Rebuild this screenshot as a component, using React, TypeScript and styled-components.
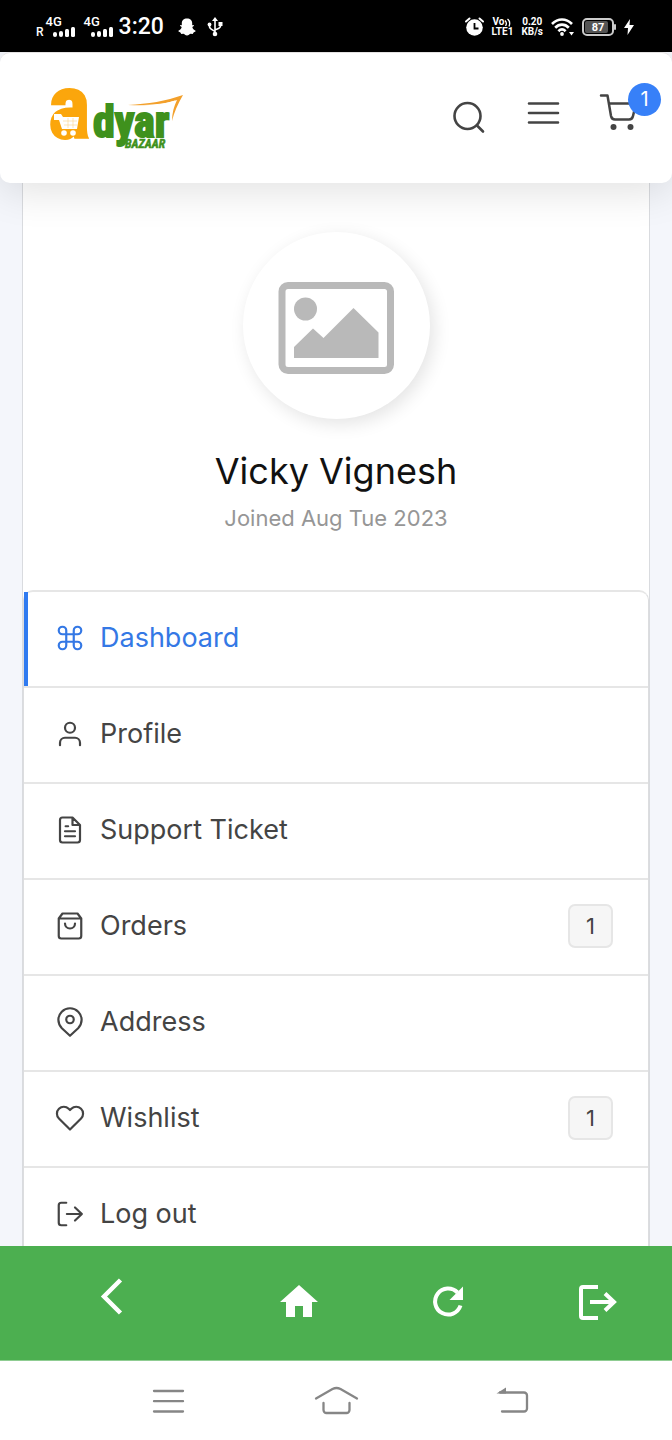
import React from "react";
import styled, { createGlobalStyle, css } from "styled-components";

const GlobalStyle = createGlobalStyle`
  * { box-sizing: border-box; }
  body {
    margin: 0;
    background: #f4f6fb;
    color: #444;
    font-family: Inter, Roboto, "Liberation Sans", sans-serif;
  }
  button { border: 0; padding: 0; background: none; color: inherit; font: inherit; cursor: pointer; }
  svg { display: block; flex: none; overflow: visible; }
`;

const Screen = styled.div`
  display: flex;
  flex-direction: column;
  height: 100vh;
  overflow: hidden;
`;

/* ---------- Status bar ---------- */

const StatusBar = styled.div`
  display: flex;
  flex: none;
  align-items: center;
  justify-content: space-between;
  padding: 17px 38px 15px 36px;
  background: #000;
  color: #fff;
  font-family: Roboto, sans-serif;
`;

const StatusGroup = styled.div<{ $gap: number }>`
  display: flex;
  align-items: center;
  gap: ${(p) => p.$gap}px;
  height: 20px;
`;

const Roaming = styled.span`
  align-self: flex-end;
  margin-right: 2px;
  font-size: 12px;
  font-weight: 500;
  line-height: 10px;
`;

const Signals = styled.div`
  display: flex;
  gap: 15px;
`;

const Signal = styled.div`
  display: flex;
  flex-direction: column;
  width: 23px;
  font-size: 13px;
  font-weight: 500;
  line-height: 10px;

  svg { margin-left: 7px; }
`;

const Clock = styled.span`
  margin: 0 14px 0 12px;
  font-size: 23px;
  font-weight: 500;
  line-height: 20px;
`;

const Stacked = styled.div`
  display: flex;
  flex-direction: column;
  align-items: center;
  font-size: 10px;
  font-weight: 700;
  line-height: 10px;
`;

const VoLine = styled.span`
  display: flex;
  align-items: center;
`;

/* ---------- Header ---------- */

const Header = styled.header`
  position: relative;
  z-index: 1;
  display: flex;
  flex: none;
  align-items: center;
  justify-content: space-between;
  padding: 32px 35px 31px 46px;
  border-top: 1px solid #e4e2e2;
  border-radius: 10px;
  background: #fff;
  box-shadow: 0 8px 40px rgba(0, 0, 0, 0.12);
`;

const LogoLink = styled.a`
  display: block;
`;

const Actions = styled.div`
  display: flex;
  gap: 40px;
  padding-bottom: 4px;
  color: #444;
`;

const IconButton = styled.button`
  position: relative;
  display: flex;
`;

const CartCount = styled.span`
  position: absolute;
  top: -10px;
  right: -24px;
  width: 33px;
  border-radius: 50%;
  background: #3780f8;
  color: #fff;
  font-size: 20px;
  line-height: 33px;
  text-align: center;
`;

/* ---------- Account card ---------- */

const Main = styled.main`
  flex: 1;
  min-height: 0;
  overflow: hidden;
  padding: 0 22px;
`;

const Card = styled.section`
  border: solid #d9dbdf;
  border-width: 0 1px;
  background: #fff;
`;

const Summary = styled.div`
  display: flex;
  flex-direction: column;
  align-items: center;
  padding: 49px 16px 58px;
`;

const Avatar = styled.div`
  display: flex;
  align-items: center;
  justify-content: center;
  width: 187px;
  height: 187px;
  margin-bottom: 30px;
  padding-top: 4px;
  border-radius: 50%;
  background: #fff;
  box-shadow: 4px 5px 18px rgba(0, 0, 0, 0.11);
`;

const Name = styled.h1`
  margin: 0;
  color: #111;
  font-size: 36px;
  font-weight: 400;
  line-height: 44px;
`;

const Joined = styled.p`
  margin: 11px 0 0;
  color: #969696;
  font-size: 22px;
  line-height: 28px;
`;

const Menu = styled.ul`
  margin: 0;
  padding: 0;
  border: 1px solid #dcdddf;
  border-top: 2px solid #e6e6e6;
  border-radius: 10px 10px 0 0;
  list-style: none;
`;

const MenuLink = styled.a<{ $active?: boolean }>`
  display: flex;
  align-items: center;
  gap: 15px;
  height: 96px;
  padding: 0 35px 2px 31px;
  border-bottom: 2px solid #e6e6e6;
  color: #444;
  font-size: 27px;
  line-height: 32px;
  text-decoration: none;

  ${(p) =>
    p.$active &&
    css`
      color: #3478e5;
      box-shadow: inset 4px 0 #2f7af0;
    `}
`;

const Count = styled.span`
  width: 45px;
  margin-left: auto;
  border: 2px solid #e6e6e6;
  border-radius: 7px;
  background: #f6f6f6;
  font-size: 22px;
  line-height: 40px;
  text-align: center;
`;

/* ---------- Bottom bars ---------- */

const AppBar = styled.nav`
  display: grid;
  flex: none;
  grid-template-columns: 3fr 2fr 2fr 2fr;
  justify-items: center;
  padding: 32px 0 34px;
  border-bottom: 1px solid #8fcd92;
  background: #4caf50;
  color: #fff;
`;

const SystemBar = styled.nav`
  display: grid;
  flex: none;
  grid-template-columns: repeat(3, 1fr);
  justify-items: center;
  padding: 16px 12.5% 15px;
  background: #fff;
  color: #868686;
`;

/* ---------- Drawings ---------- */

const LineIcon = ({ children }: { children: React.ReactNode }) => (
  <svg width="30" height="30" viewBox="0 0 24 24" fill="none" stroke="currentColor" strokeWidth="1.75" strokeLinecap="round" strokeLinejoin="round" aria-hidden="true">
    {children}
  </svg>
);

const SignalBars = () => (
  <svg width="23" height="11" viewBox="0 0 23 11" fill="currentColor" aria-hidden="true">
    <rect x="0" y="5" width="4" height="5" rx="2" />
    <rect x="6" y="4" width="4" height="6" rx="2" />
    <rect x="12" y="2" width="4" height="8" rx="1.5" />
    <rect x="18" y="0" width="4" height="10" rx="1.5" />
  </svg>
);

const Ghost = () => (
  <svg width="18" height="18" viewBox="0 0 18 18" fill="currentColor" aria-hidden="true">
    <path d="M9 .5c3.200 0 5.200 2 5.200 4.700v2l1.400-.1c.5.3.3.9-.2 1.200l-1.100.8c.4 1.800 1.500 3.100 3.300 3.700.3.7-1 1.300-2 1.600l-.9 1.500-2-.1c-1.200.2-2 1.700-3.700 1.700s-2.500-1.500-3.700-1.700l-2 .1-.9-1.500c-1-.3-2.300-.9-2-1.600 1.800-.6 2.900-1.900 3.300-3.700l-1.100-.8c-.5-.3-.7-.9-.2-1.200l1.400.1v-2C3.800 2.500 5.800.5 9 .5z" />
  </svg>
);

const Usb = () => (
  <svg width="16" height="20" viewBox="0 0 16 20" fill="none" stroke="currentColor" strokeWidth="1.6" aria-hidden="true">
    <path d="M8 3v13M2.500 8v1.500C2.500 12 5 12.500 8 14.500M13.500 7v2C13.500 11.500 11 11.500 8 13" />
    <path d="M8 0l3 4H5z" fill="currentColor" stroke="none" />
    <circle cx="8" cy="17" r="2.300" fill="currentColor" stroke="none" />
    <circle cx="2.500" cy="7.500" r="1.900" fill="currentColor" stroke="none" />
    <rect x="11.500" y="5" width="4" height="4" fill="currentColor" stroke="none" />
  </svg>
);

const Alarm = () => (
  <svg width="19" height="20" viewBox="0 0 19 20" fill="none" aria-hidden="true">
    <circle cx="9.500" cy="10.500" r="8.300" fill="#fff" />
    <path d="M1 4.500L4.500 1.500M18 4.500L14.500 1.500" stroke="#fff" strokeWidth="2" strokeLinecap="round" />
    <path d="M9.500 6V11.500h4" stroke="#000" strokeWidth="1.800" />
  </svg>
);

const Waves = () => (
  <svg width="8" height="9" viewBox="0 0 8 9" fill="none" stroke="currentColor" strokeWidth="1.3" aria-hidden="true">
    <path d="M1 2.500c1.500 1.500 1.500 4 .5 5.500M3.500 1C6 3 6 6 5 8.500" />
  </svg>
);

const Wifi = () => (
  <svg width="23" height="19" viewBox="0 0 23 19" fill="none" stroke="currentColor" strokeWidth="2.7" aria-hidden="true">
    <path d="M1 6C7 0 15 0 21 6M4.200 9.700c4-4 9.600-4 13.600 0M7.400 13.200c2.200-2.200 5-2.200 7.200 0" />
    <circle cx="11" cy="16" r="1.900" fill="currentColor" stroke="none" />
    <path d="M18 14h5l-2.500 3.500z" fill="currentColor" stroke="none" />
  </svg>
);

const Battery = () => (
  <svg width="34" height="20" viewBox="0 0 34 20" aria-label="Battery 87%">
    <rect x="1" y="2" width="30" height="16" rx="4" fill="#000" stroke="#ccc" strokeWidth="2" />
    <rect x="3" y="4" width="23" height="12" rx="2" fill="#555" />
    <rect x="32" y="7" width="2" height="6" rx="1" fill="#ccc" />
    <text x="16" y="14" textAnchor="middle" fill="#fff" fontFamily="Roboto, sans-serif" fontSize="11" fontWeight="700">87</text>
  </svg>
);

const Bolt = () => (
  <svg width="10" height="16" viewBox="0 0 10 16" fill="currentColor" aria-hidden="true">
    <path d="M6 0L0 9h4l-.500 7L10 6H5.500z" />
  </svg>
);

const Logo = () => (
  <svg width="140" height="67" viewBox="0 0 140 67" role="img" aria-label="Adyar Bazaar">
    <g fontFamily="'Liberation Sans Narrow', 'Roboto Condensed', 'DejaVu Sans Condensed', sans-serif" fontWeight="700">
      <text x="2" y="53" fontSize="90" fill="#fba60c" stroke="#fba60c" strokeWidth="2">a</text>
      <text x="47" y="52" fontSize="44" fill="#3f911d" stroke="#3f911d" strokeWidth="2">dyar</text>
      <text x="79" y="63" fontSize="12" fontStyle="italic" fill="#3f911d" stroke="#3f911d" strokeWidth=".5">BAZAAR</text>
    </g>
    <path d="M8 29h7l2 3h16l-2 12H16l-3-9H8z" fill="#fff" />
    <path d="M17 36h14M18 40h13M22 33v10M27 33v10" stroke="#fbd48a" strokeWidth=".6" />
    <circle cx="18" cy="48" r="2.800" fill="#fff" />
    <circle cx="27" cy="48" r="2.800" fill="#fff" />
    <path d="M82 20C102 19 120 16 137 10C132 19 128 27 126 36C126 28 128 21 131 15C116 20 100 21 82 20z" fill="#f3a02b" />
    <path d="M92 20c14 0 26-1 37-4.500l-1 1.500c-10 3-22 4-36 3z" fill="#fff" />
  </svg>
);

const SearchIcon = () => (
  <svg width="34" height="48" viewBox="0 0 34 48" fill="none" stroke="currentColor" strokeWidth="2.6" strokeLinecap="round" aria-hidden="true">
    <circle cx="16.500" cy="23" r="13" />
    <path d="M26 32.500l6 6" />
  </svg>
);

const ListIcon = () => (
  <svg width="34" height="48" viewBox="0 0 34 48" fill="none" stroke="currentColor" strokeWidth="2.6" strokeLinecap="round" aria-hidden="true">
    <path d="M4 10.500h29M4 20h29M4 29.500h29" />
  </svg>
);

const CartIcon = () => (
  <svg width="38" height="48" viewBox="0 0 38 48" fill="none" stroke="currentColor" strokeWidth="2.5" strokeLinecap="round" strokeLinejoin="round" aria-hidden="true">
    <path d="M2 2.500h6.500L12 23c.5 2.500 1.500 3.500 4 3.500h14c2.500 0 3.500-1 4-3.500L37 10.500H10" />
    <circle cx="14.500" cy="34" r="3" fill="currentColor" stroke="none" />
    <circle cx="31.500" cy="34" r="3" fill="currentColor" stroke="none" />
  </svg>
);

const Placeholder = () => (
  <svg width="116" height="92" viewBox="0 0 116 92" fill="#b9b9b9" role="img" aria-label="No profile picture">
    <rect x="4" y="3.500" width="108.500" height="85" rx="6" fill="none" stroke="#b9b9b9" strokeWidth="7" />
    <circle cx="27.500" cy="27" r="11.500" />
    <path d="M16 76V65l19-18.500L45.500 56l30-30 25 24.500V76z" />
  </svg>
);

const items = [
  {
    label: "Dashboard",
    active: true,
    icon: <path d="M18 3a3 3 0 0 0-3 3v12a3 3 0 1 0 3-3H6a3 3 0 1 0 3 3V6a3 3 0 1 0-3 3h12a3 3 0 1 0 0-6z" />,
  },
  {
    label: "Profile",
    icon: (
      <>
        <path d="M20 21v-2a4 4 0 0 0-4-4H8a4 4 0 0 0-4 4v2" />
        <circle cx="12" cy="7" r="4" />
      </>
    ),
  },
  {
    label: "Support Ticket",
    icon: <path d="M14 2H6a2 2 0 0 0-2 2v16a2 2 0 0 0 2 2h12a2 2 0 0 0 2-2V8zM14 2v6h6M16 13H8M16 17H8M10.500 9H8.500" />,
  },
  {
    label: "Orders",
    count: 1,
    icon: <path d="M6 2L3 6v14a2 2 0 0 0 2 2h14a2 2 0 0 0 2-2V6l-3-4zM3 6h18M16 10a4 4 0 0 1-8 0" />,
  },
  {
    label: "Address",
    icon: (
      <>
        <path d="M12 23l-6.500-6C3.600 15 2.700 12.800 2.700 10.300a9.300 9.300 0 0 1 18.600 0c0 2.500-.9 4.700-2.800 6.700z" />
        <circle cx="12" cy="10" r="3" />
      </>
    ),
  },
  {
    label: "Wishlist",
    count: 1,
    icon: <path d="M20.840 4.610a5.500 5.500 0 0 0-7.780 0L12 5.670l-1.060-1.060a5.500 5.500 0 0 0-7.780 7.780L12 21.230l8.840-8.840a5.500 5.500 0 0 0 0-7.780z" />,
  },
  {
    label: "Log out",
    icon: <path d="M9 21H5a2 2 0 0 1-2-2V5a2 2 0 0 1 2-2h4M9.500 12H21.500M16 6.800l5.500 5.200-5.500 5.200" />,
  },
];

export default function App() {
  return (
    <Screen>
      <GlobalStyle />
      <StatusBar>
        <StatusGroup $gap={0}>
          <Roaming>R</Roaming>
          <Signals>
            <Signal>4G<SignalBars /></Signal>
            <Signal>4G<SignalBars /></Signal>
          </Signals>
          <Clock>3:20</Clock>
          <StatusGroup $gap={11}>
            <Ghost />
            <Usb />
          </StatusGroup>
        </StatusGroup>
        <StatusGroup $gap={8}>
          <Alarm />
          <Stacked>
            <VoLine>Vo<Waves /></VoLine>
            <span>LTE1</span>
          </Stacked>
          <Stacked>
            <span>0.20</span>
            <span>KB/s</span>
          </Stacked>
          <Wifi />
          <Battery />
          <Bolt />
        </StatusGroup>
      </StatusBar>

      <Header>
        <LogoLink href="#home"><Logo /></LogoLink>
        <Actions>
          <IconButton type="button" aria-label="Search"><SearchIcon /></IconButton>
          <IconButton type="button" aria-label="Menu"><ListIcon /></IconButton>
          <IconButton type="button" aria-label="Cart">
            <CartIcon />
            <CartCount>1</CartCount>
          </IconButton>
        </Actions>
      </Header>

      <Main>
        <Card>
          <Summary>
            <Avatar><Placeholder /></Avatar>
            <Name>Vicky Vignesh</Name>
            <Joined>Joined Aug Tue 2023</Joined>
          </Summary>
          <Menu>
            {items.map((item) => (
              <li key={item.label}>
                <MenuLink href="#" $active={item.active}>
                  <LineIcon>{item.icon}</LineIcon>
                  {item.label}
                  {item.count && <Count>{item.count}</Count>}
                </MenuLink>
              </li>
            ))}
          </Menu>
        </Card>
      </Main>

      <AppBar>
        <IconButton type="button" aria-label="Back">
          <svg width="40" height="48" viewBox="0 0 40 48" fill="none" stroke="currentColor" strokeWidth="4.500">
            <path d="M28.500 2L12 18.500 28.500 35" />
          </svg>
        </IconButton>
        <IconButton type="button" aria-label="Home">
          <svg width="40" height="48" viewBox="0 0 40 48" fill="currentColor">
            <path d="M20 7L1 24h6v15h9V28h8v11h9V24h6z" />
          </svg>
        </IconButton>
        <IconButton type="button" aria-label="Reload">
          <svg width="40" height="48" viewBox="0 0 40 48" fill="none" stroke="currentColor" strokeWidth="4">
            <path d="M32.500 27.500A13 13 0 1 1 29.500 14.500" />
            <path d="M35 8.500V22H21.500z" fill="currentColor" stroke="none" />
          </svg>
        </IconButton>
        <IconButton type="button" aria-label="Log out">
          <svg width="40" height="48" viewBox="0 0 40 48" fill="none" stroke="currentColor" strokeWidth="4">
            <path d="M21 9H6a2 2 0 0 0-2 2v27a2 2 0 0 0 2 2h15" />
            <path d="M13 24H37M28 15.500l9 8.500-9 8.500" />
          </svg>
        </IconButton>
      </AppBar>

      <SystemBar>
        <IconButton type="button" aria-label="Recent apps">
          <svg width="48" height="48" viewBox="0 0 48 48" fill="none" stroke="currentColor" strokeWidth="2.3" strokeLinecap="round">
            <path d="M10 14h29M10 24.200h29M10 34.500h29" />
          </svg>
        </IconButton>
        <IconButton type="button" aria-label="Home screen">
          <svg width="48" height="48" viewBox="0 0 48 48" fill="none" stroke="currentColor" strokeWidth="2.3" strokeLinecap="round" strokeLinejoin="round">
            <path d="M4 21.500L20.500 12q4-2 8 0L45 21.500M11.500 26v7a3 3 0 0 0 3 3h20a3 3 0 0 0 3-3v-7" />
          </svg>
        </IconButton>
        <IconButton type="button" aria-label="Go back">
          <svg width="48" height="48" viewBox="0 0 48 48" fill="none" stroke="currentColor" strokeWidth="2.3" strokeLinecap="round">
            <path d="M20 15.500h24a3 3 0 0 1 3 3V31.500a3 3 0 0 1-3 3H22" />
            <path d="M16.500 16.500L26 10.500v6z" fill="currentColor" stroke="none" />
          </svg>
        </IconButton>
      </SystemBar>
    </Screen>
  );
}
